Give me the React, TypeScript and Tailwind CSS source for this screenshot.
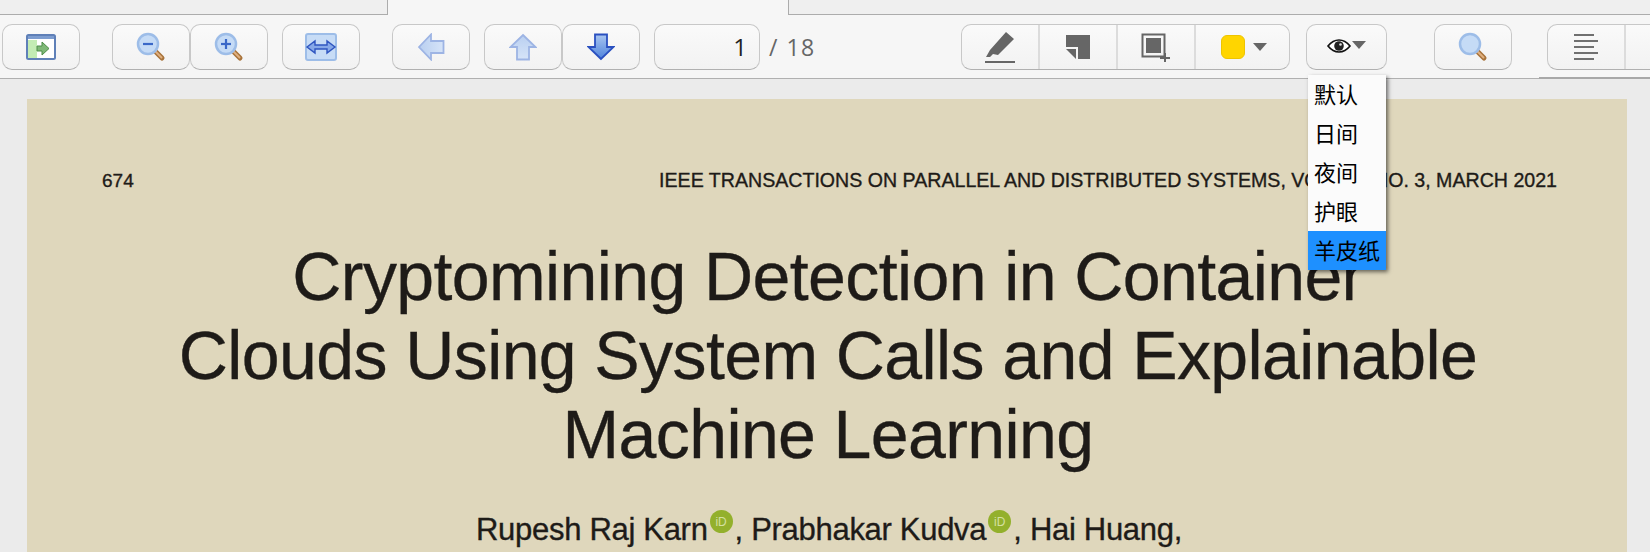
import type { FC, ReactNode } from "react";

const Btn: FC<{ children?: ReactNode; className?: string }> = ({ children, className = "w-[78px]" }) => (
  <div className={`flex h-[46px] shrink-0 items-center justify-center rounded-[10px] border border-[#c8c8c8] border-b-[#b0b0b0] bg-gradient-to-b from-[#fafafa] to-[#f2f2f2] ${className}`}>
    {children}
  </div>
);

const Seg: FC<{ children?: ReactNode; className?: string }> = ({ children, className = "w-[78px]" }) => (
  <div className={`flex h-full shrink-0 items-center justify-center border-r-2 border-[#dcdcdc] last:border-r-0 ${className}`}>
    {children}
  </div>
);

const Lens: FC<{ sign?: "minus" | "plus" }> = ({ sign }) => (
  <svg width="30" height="30" viewBox="0 0 30 30">
    <path d="M18 18l8 8" stroke="#a8733a" strokeWidth="5" strokeLinecap="round" />
    <path d="M19 19l6.500 6.500" stroke="#e0b080" strokeWidth="2" strokeLinecap="round" />
    <circle cx="12" cy="12" r="10" fill="#c5dbf6" stroke="#9dbde8" strokeWidth="2.500" />
    {sign && <path d="M7 12h10" stroke="#3a68c8" strokeWidth="2.200" />}
    {sign === "plus" && <path d="M12 7v10" stroke="#3a68c8" strokeWidth="2.200" />}
  </svg>
);

const Arrow: FC<{ rotate: number; faded?: boolean }> = ({ rotate, faded }) => (
  <svg width="28" height="28" viewBox="0 0 28 28" style={{ transform: `rotate(${rotate}deg)` }}>
    <defs>
      <linearGradient id={faded ? "af" : "as"} x1="0" y1="0" x2="0" y2="1">
        <stop offset="0" stopColor={faded ? "#d6e4f8" : "#a9c6f0"} />
        <stop offset="1" stopColor={faded ? "#b9cff0" : "#4f83dc"} />
      </linearGradient>
    </defs>
    <path
      d="M14 26L1.500 14H8V1.500h12V14h6.500z"
      fill={`url(#${faded ? "af" : "as"})`}
      stroke={faded ? "#9db4e4" : "#2a50c0"}
      strokeWidth="1.800"
    />
  </svg>
);

const OrcidBadge: FC = () => (
  <span className="relative -top-[10px] mx-[2px] inline-flex h-[23px] w-[23px] items-center justify-center rounded-full bg-[#93b02c] align-middle text-[12px] leading-none tracking-normal text-[#d5e0a0] [-webkit-text-stroke:0]">
    iD
  </span>
);

const App: FC = () => {
  return (
    <div className="relative flex h-[552px] w-[1650px] flex-col overflow-hidden bg-[#ebebeb] font-['Liberation_Sans',sans-serif]">
      {/* tab strip */}
      <div className="flex h-[15px] shrink-0 bg-[#efefef]">
        <div className="h-full w-[388px] border-r border-b border-[#acacac]" />
        <div className="h-full w-[400px] bg-[#f6f6f6]" />
        <div className="h-full flex-1 border-b border-l border-[#acacac]" />
      </div>

      {/* toolbar */}
      <div className="flex h-[64px] shrink-0 items-start overflow-hidden border-b border-[#b0b0b0] bg-[#f6f6f6] pt-[9px] pl-[2px]">
        <Btn>
          <svg width="30" height="26" viewBox="0 0 30 26">
            <rect x="1" y="1" width="28" height="24" rx="1.500" fill="#fff" stroke="#5f80b8" strokeWidth="2" />
            <rect x="2" y="2" width="26" height="3" fill="#7d9dd0" />
            <rect x="2" y="6" width="9" height="18" fill="#c3ecb4" />
            <path d="M11 12h5V8l7 6.500-7 6.500v-4h-5z" fill="#7fb877" stroke="#4d8d48" strokeWidth="1" />
          </svg>
        </Btn>
        <Btn className="ml-[32px] w-[78px]"><Lens sign="minus" /></Btn>
        <Btn><Lens sign="plus" /></Btn>
        <Btn className="ml-[14px] w-[78px]">
          <svg width="32" height="28" viewBox="0 0 32 28">
            <rect x="1" y="1" width="30" height="26" rx="2" fill="#c7dcf6" stroke="#9dbde8" strokeWidth="2" />
            <path d="M2 14l8-6v4h12V8l8 6-8 6v-4H10v4z" fill="#86a8e8" stroke="#2f55c0" strokeWidth="1.400" />
          </svg>
        </Btn>
        <Btn className="ml-[32px] w-[78px]"><Arrow rotate={90} faded /></Btn>
        <Btn className="ml-[14px] w-[78px]"><Arrow rotate={180} faded /></Btn>
        <Btn><Arrow rotate={0} /></Btn>
        <Btn className="ml-[14px] w-[106px] justify-end pr-[12px] font-['Open_Sans',sans-serif] text-[24px] text-[#222]">1</Btn>
        <span className="ml-[9px] flex h-[46px] shrink-0 items-center font-['Open_Sans',sans-serif] text-[23px] tracking-[1.500px] text-[#666]">/ 18</span>

        <div className="ml-[145px] flex h-[46px] shrink-0 rounded-[10px] border border-[#c8c8c8] border-b-[#b0b0b0] bg-gradient-to-b from-[#fafafa] to-[#f2f2f2]">
          <Seg>
            <svg width="34" height="34" viewBox="0 0 34 34">
              <path d="M7 20L23 2l8 7-16 16-5-1-3 3H3z" fill="#666" />
              <path d="M2 32h30" stroke="#666" strokeWidth="2" />
            </svg>
          </Seg>
          <Seg>
            <svg width="26" height="26" viewBox="0 0 26 26">
              <path d="M1 1h24v24H13V13H1z" fill="#666" />
              <path d="M1 15h10v10z" fill="#666" />
            </svg>
          </Seg>
          <Seg>
            <svg width="30" height="30" viewBox="0 0 30 30">
              <path d="M1.500 2.500h22v22h-22z" fill="none" stroke="#666" strokeWidth="2" />
              <rect x="5" y="6" width="15" height="15" fill="#666" />
              <path d="M19 26h10M24 21v9" stroke="#666" strokeWidth="2" />
            </svg>
          </Seg>
          <Seg className="w-[93px] gap-[8px] pl-[3px]">
            <span className="h-[24px] w-[24px] rounded-[6px] border border-[#eec400] bg-[#ffd500]" />
            <span className="h-0 w-0 border-x-[7px] border-t-[8px] border-x-transparent border-t-[#666]" />
          </Seg>
        </div>

        <Btn className="ml-[16px] w-[81px] gap-[1px] pb-[2px]">
          <svg width="24" height="14" viewBox="0 0 24 14">
            <path d="M1 7C5 2 9 1 12 1s7 1 11 6c-4 5-8 6-11 6S5 12 1 7z" fill="#fff" stroke="#111" strokeWidth="1.700" />
            <circle cx="12" cy="7" r="4.800" fill="#222" />
            <circle cx="13.500" cy="5.500" r="1.300" fill="#ddd" />
          </svg>
          <span className="mb-[2px] h-0 w-0 border-x-[7px] border-t-[8px] border-x-transparent border-t-[#666]" />
        </Btn>
        <Btn className="ml-[47px] w-[78px]"><Lens /></Btn>

        <div className="ml-[35px] flex h-[46px] w-[120px] shrink-0 rounded-l-[10px] border-y border-l border-[#c8c8c8] border-b-[#b0b0b0] bg-gradient-to-b from-[#fafafa] to-[#f2f2f2]">
          <Seg>
            <svg width="24" height="28" viewBox="0 0 24 28">
              <path d="M0 2h20M0 8h24M0 14h20M0 20h24M0 26h20" stroke="#707070" strokeWidth="2" />
            </svg>
          </Seg>
          <div className="flex-1" />
        </div>
      </div>

      {/* page */}
      <div className="mt-[20px] mr-[23px] ml-[27px] flex-1 bg-[#dfd7bc] px-[75px] text-[#1e1b18] [-webkit-text-stroke:0.35px_#1e1b18]">
        <div className="mt-[70px] flex items-baseline justify-between leading-[22px]">
          <span className="text-[19px]">674</span>
          <span className="mr-[-5px] text-[19.600px]">IEEE TRANSACTIONS ON PARALLEL AND DISTRIBUTED SYSTEMS, VOL. 32, NO. 3, MARCH 2021</span>
        </div>
        <h1 className="mx-[-60px] mt-[45px] pl-[2px] text-center text-[68px] leading-[79px] font-normal tracking-[-0.600px]">
          Cryptomining Detection in Container
          <br />
          Clouds Using System Calls and Explainable
          <br />
          Machine Learning
        </h1>
        <p className="mt-[38px] pl-[4px] text-center text-[31px] leading-[36px] tracking-[-0.300px]">
          Rupesh Raj Karn<OrcidBadge />, Prabhakar Kudva<OrcidBadge />, Hai Huang,
        </p>
      </div>

      {/* thicker rule under the cut-off group */}
      <div className="absolute top-[77px] left-[1539px] h-[2px] w-[111px] bg-[#a8a8a8]" />

      {/* view mode menu */}
      <div className="absolute top-[75px] left-[1308px] w-[78px] bg-[#fbfbfb] font-['Noto_Sans_CJK_SC',sans-serif] text-[22px] text-black shadow-[2px_2px_4px_rgba(0,0,0,0.55)]">
        {["默认", "日间", "夜间", "护眼", "羊皮纸"].map((label, i) => (
          <div key={label} className={`flex h-[39px] items-center pb-[3px] pl-[6px] ${i === 4 ? "bg-[#1e90ff]" : ""}`}>
            {label}
          </div>
        ))}
      </div>
    </div>
  );
};

export default App;
